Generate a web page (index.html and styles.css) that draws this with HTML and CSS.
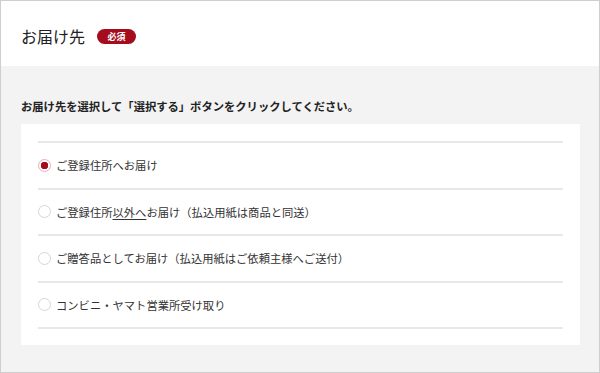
FILE: index.html
```html
<!DOCTYPE html>
<html lang="ja">
  <head>
    <meta charset="UTF-8" />
    <title>お届け先</title>
    <meta name="viewport" content="width=device-width, initial-scale=1" />
    <link rel="stylesheet" href="styles.css">
  </head>
  <body>
    <div class="panel">
      <div class="head">
        <h2>お届け先</h2>
        <span class="badge">必須</span>
      </div>
      <div class="body">
        <p class="lead">お届け先を選択して「選択する」ボタンをクリックしてください。</p>
        <div class="card">
          <label class="opt">
            <input type="radio" name="dest" checked />
            <span>ご登録住所へお届け</span>
          </label>
          <label class="opt">
            <input type="radio" name="dest" />
            <span>ご登録住所<u>以外へ</u>お届け（払込用紙は商品と同送）</span>
          </label>
          <label class="opt">
            <input type="radio" name="dest" />
            <span>ご贈答品としてお届け（払込用紙はご依頼主様へご送付）</span>
          </label>
          <label class="opt">
            <input type="radio" name="dest" />
            <span>コンビニ・ヤマト営業所受け取り</span>
          </label>
        </div>
      </div>
    </div>
  </body>
</html>
```

FILE: styles.css
```css
* {
  box-sizing: border-box;
}
body {
  margin: 0;
  font-family: "Noto Sans CJK JP", "Noto Sans", sans-serif;
  color: #333;
}
.panel {
  width: 600px;
  height: 373px;
  border: 1px solid #cfcfcf;
  display: flex;
  flex-direction: column;
}
.head {
  height: 65px;
  background: #fff;
  display: flex;
  align-items: center;
  gap: 12px;
  padding: 5px 20px 0;
}
.head h2 {
  margin: 0;
  font-size: 16px;
  font-weight: normal;
  color: #222;
}
.badge {
  display: inline-block;
  width: 39px;
  height: 15px;
  line-height: 15px;
  border-radius: 8px;
  background: #a50c1d;
  color: #fff;
  font-size: 9px;
  font-weight: bold;
  text-align: center;
}
.body {
  flex: 1;
  background: #f3f3f3;
  padding: 31px 19px 0 20px;
}
.lead {
  margin: 0 0 9px;
  font-size: 11.3px;
  line-height: 18px;
  font-weight: bold;
  color: #222;
}
.card {
  background: #fff;
  padding: 17px 17px 16px;
}
.opt {
  display: flex;
  align-items: center;
  gap: 5px;
  height: 46.5px;
  border-top: 2px solid #e8e8e8;
  font-size: 11.3px;
  color: #333;
}
.opt:last-child {
  height: 48.5px;
  border-bottom: 2px solid #e8e8e8;
}
.opt input {
  appearance: none;
  margin: 0;
  width: 13px;
  height: 13px;
  border: 1px solid #d6d6d6;
  border-radius: 50%;
  background: #fff;
}
.opt input:checked {
  border-color: #e8b0b5;
  background: radial-gradient(circle, #a50c1d 0 3.5px, #fff 4px);
}
.opt u {
  text-underline-offset: 2px;
}
```
